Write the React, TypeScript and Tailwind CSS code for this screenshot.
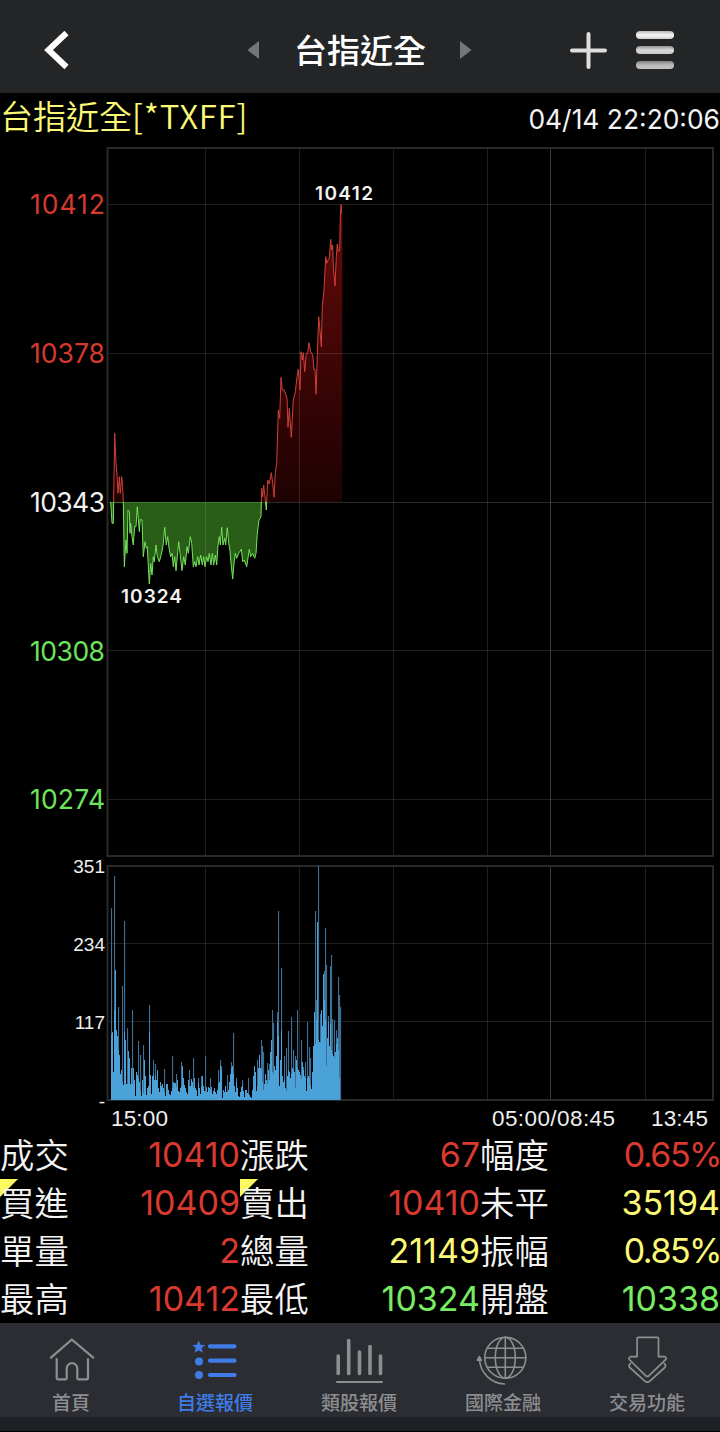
import type React from "react";

const BASE_Y = 502;
const VOLUME_BASE = 1100;

const priceLabels = [
  { y: 204, text: "10412", fill: "#d63a2f" },
  { y: 353, text: "10378", fill: "#d63a2f" },
  { y: 502, text: "10343", fill: "#f2f2f2" },
  { y: 651, text: "10308", fill: "#6fe35c" },
  { y: 799.5, text: "10274", fill: "#6fe35c" },
];

const volumeLabels = [
  { y: 866.5, text: "351" },
  { y: 944.5, text: "234" },
  { y: 1022, text: "117" },
  { y: 1101, text: "-" },
];

const timeLabels = [
  { x: 111, text: "15:00", width: 57 },
  { x: 492, text: "05:00/08:45", width: 123 },
  { x: 651, text: "13:45", width: 57 },
];

// x y pairs, one per tick
const price =
  "110.7,502 112,523.3 113.3,523.3 114.7,433.3 116,463.3 117,475 118,493.3 119.3,476.7 120.3,493.3 121.7,476.7 122.7,486.7 123.3,502 " +
  "124.3,566.7 126,540 127,553.3 128,510 129.3,511.7 130,533.3 130.7,523.3 132,536.7 133.3,545 134.7,526.7 136,526.7 137.3,506.7 139.3,531.7 " +
  "140.3,519.3 142,520 143.3,556.7 145,541.7 146.3,548.3 147.3,546.7 149.3,584 150.7,563.3 152,575 153.3,556.7 154.3,561.7 156,545 157.3,556.7 " +
  "159.3,561.7 160.7,556.7 162.3,550 163.3,543.3 164.7,527.3 166.3,545 167.7,536.7 169.3,550 170.7,556.7 172,553.3 173.3,566.7 174.7,556.7 176,570.7 " +
  "177.3,556.7 178.7,541.7 180,553.3 182,570.7 183.7,556.7 185.3,565 187,546.7 188.3,553.3 190.3,536.7 191.7,543.3 193.3,566.7 194.7,561.7 196,566.7 " +
  "197.7,556.7 199,565 200.7,555 202.3,565 203.7,556.7 205,566.7 206.7,556.7 208,561.7 209.3,553.3 211,565 212.3,553.3 213.7,565 215.3,555 216.7,565 " +
  "218,545 219.3,536.7 220.3,545 221.7,527.3 223,545 224.7,538.3 225.7,545 227.3,527.7 228.7,543 230,551 " +
  "231,563 232.7,579 234,563.3 235.3,553.3 236.7,558.3 238.7,553.3 241.3,549.3 242.7,561.7 244.3,560 246.7,566.7 249.3,549.3 250.7,556.7 252.7,553.3 " +
  "254.7,558.3 256,553.3 257.3,533.3 259,520 261,516.7 261.7,488.3 262.7,496.7 263.7,485 265.3,500 266.3,510 267.7,480 269.3,484 271.3,472.7 " +
  "272.7,483.3 274,497.3 275.3,473.3 276.7,463.3 278.3,410 279.7,418.3 281,377.3 282.3,390 284,390 286,395 287,398.3 288,427.3 289.3,408.3 291.3,437.3 " +
  "293.3,400 295.3,391.7 297.3,375 298.3,369.3 300,390 301,351.7 302.3,360 303.3,352.7 304.7,371.7 306.3,353.3 307.7,352.7 309,342.7 310.7,351.7 " +
  "312.7,355 314,370 315,369.3 316,394.3 317.3,356 318.7,316.7 319.7,326.7 321.3,346.7 322.3,306.7 324,290 325.7,256.7 326.7,263.3 328,260 329.3,258.3 " +
  "330.7,239.3 331.7,250 332.7,245 333.3,266.7 335,286 336.3,256.7 337.3,244 338.3,251.7 339.7,250 340.3,216.7 341,204.7 341.7,213.3";

const area = `${price} 342.3,213.3 342.3,${BASE_Y} 110.7,${BASE_Y}`;

// solid volume per pixel column, starting at x = 111
const volume = [
  66, 68, 28, 90, 130, 70, 64, 50, 45, 26, 30, 18, 15, 68, 60, 16, 16, 49, 42, 16, 32, 16, 32, 20, 4, 28, 25, 22, 18, 9,
  4, 20, 7, 40, 24, 5, 12, 14, 68, 25, 6, 24, 26, 20, 25, 20, 30, 12, 8, 18, 14, 16, 12, 8, 4, 16, 16, 10, 6,
  5, 9, 12, 18, 17, 17, 13, 20, 9, 8, 12, 14, 34, 22, 15, 12, 8, 6, 20, 14, 14, 21, 18, 12, 22, 12, 10, 4,
  17, 12, 6, 13, 24, 14, 9, 9, 13, 8, 13, 12, 10, 13, 6, 9, 12, 8, 6, 10, 16, 18, 34, 30, 2, 10, 8, 14,
  8, 8, 10, 18, 26, 32, 34, 26, 14, 8, 18, 12, 4, 3, 8, 13, 15, 9, 3, 10, 10, 7, 6, 5, 3,
  2, 10, 24, 34, 28, 9, 14, 32, 45, 32, 31, 18, 10, 16, 26, 20, 16, 30, 20, 48, 60, 28, 26, 34, 30, 44, 78, 64,
  14, 40, 70, 24, 18, 20, 12, 9, 24, 30, 28, 22, 26, 32, 30, 28, 12, 40, 32, 30, 28, 25, 21, 38, 30, 24, 22, 9, 22, 24,
  22, 15, 11, 28, 54, 88, 56, 80, 178, 60, 58, 58, 90, 74, 126, 100, 80, 34, 62, 78, 54, 76, 50, 46, 44, 42, 48, 56, 62, 50,
  22,
].slice(0, 231);

const spikes = [
  [111, 192], [114, 224], [118, 93], [122, 114], [124, 179], [127, 72], [132, 90], [138, 59], [140, 45], [143, 55],
  [149, 95], [153, 40], [155, 36], [164, 31], [172, 44], [176, 26], [181, 38], [189, 30], [193, 42], [198, 22], [201, 24],
  [205, 44], [210, 22], [218, 30], [220, 40], [221, 34], [227, 25], [231, 38], [233, 67], [236, 22], [242, 20], [248, 22],
  [257, 40], [259, 25], [261, 60], [262, 54], [263, 48], [267, 37], [269, 36], [272, 90], [273, 77], [277, 88], [278, 189],
  [281, 132], [284, 44], [286, 52], [288, 69], [291, 83], [293, 50], [295, 44], [297, 90], [301, 60], [303, 33], [305, 38],
  [307, 78], [309, 53], [310, 42], [315, 189], [316, 100], [318, 234], [320, 86], [321, 80], [323, 118], [324, 129],
  [325, 172], [326, 135], [328, 84], [330, 134], [331, 145], [332, 81], [334, 80], [336, 70], [338, 123], [339, 105], [340, 93],
];

const volumePath =
  `M111 ${VOLUME_BASE}` + volume.map((v) => `V${VOLUME_BASE - v}h1`).join("") + `V${VOLUME_BASE}Z`;

const RED = "text-[#d93a30]";
const YELLOW = "text-[#fbf976]";
const GREEN = "text-[#77ec62]";

const quotes = [
  { label: "成交", value: "10410", color: RED },
  { label: "漲跌", value: "67", color: RED },
  { label: "幅度", value: "0.65%", color: RED },
  { label: "買進", value: "10409", color: RED, marked: true },
  { label: "賣出", value: "10410", color: RED, marked: true },
  { label: "未平", value: "35194", color: YELLOW },
  { label: "單量", value: "2", color: RED },
  { label: "總量", value: "21149", color: YELLOW },
  { label: "振幅", value: "0.85%", color: YELLOW },
  { label: "最高", value: "10412", color: RED },
  { label: "最低", value: "10324", color: GREEN },
  { label: "開盤", value: "10338", color: GREEN },
];

const Header = () => (
  <header className="flex h-[93px] items-center bg-[#242527] pt-[7px]">
    <button type="button" className="ml-11">
      <svg width="26" height="40" viewBox="0 0 26 40" fill="none" stroke="#fff" strokeWidth="6">
        <path d="M22.5 3 4.5 20l18 17" />
      </svg>
    </button>
    <svg className="ml-[177px]" width="12" height="18" viewBox="0 0 12 18" fill="#72787a">
      <path d="M12 0v18L.5 9z" />
    </svg>
    <h1 className="ml-[35px] w-[132px] whitespace-nowrap pb-px text-[33px] font-medium leading-none text-white">
      台指近全
    </h1>
    <svg className="ml-[34px]" width="12" height="18" viewBox="0 0 12 18" fill="#72787a">
      <path d="M0 0v18l11.5-9z" />
    </svg>
    <button type="button" className="ml-[97px]">
      <svg width="38" height="38" viewBox="0 0 38 38" stroke="#dedede" strokeWidth="4" strokeLinecap="round">
        <path d="M3 19.500h33M19.500 3v33" />
      </svg>
    </button>
    <button type="button" className="ml-[29px] flex flex-col gap-[7px]">
      <span className="h-2 w-[38px] rounded-full bg-linear-to-b from-[#b5b5b5] via-[#f6f6f6] to-[#cfcfcf]" />
      <span className="h-2 w-[38px] rounded-full bg-linear-to-b from-[#929292] via-[#d9d9d9] to-[#c9c9c9]" />
      <span className="h-2 w-[38px] rounded-full bg-linear-to-b from-[#808080] via-[#b9b9b9] to-[#c2c2c2]" />
    </button>
  </header>
);

const Chart = () => (
  <svg className="block" width="720" height="989" viewBox="0 142 720 989" fontFamily="Inter, sans-serif">
    <defs>
      <linearGradient id="rise" gradientUnits="userSpaceOnUse" x1="0" x2="0" y1="204" y2="502">
        <stop offset="0" stopColor="#690c0c" />
        <stop offset="0.5" stopColor="#400505" />
        <stop offset="1" stopColor="#1e0202" />
      </linearGradient>
      <clipPath id="above">
        <rect x="108" y="148" width="604" height="354" />
      </clipPath>
      <clipPath id="below">
        <rect x="108" y="502" width="604" height="354" />
      </clipPath>
    </defs>

    <g clipPath="url(#above)">
      <polygon points={area} fill="url(#rise)" />
    </g>
    <g clipPath="url(#below)">
      <polygon points={area} fill="#2a5d18" />
    </g>

    <g stroke="#fff" strokeOpacity="0.12" strokeWidth="1">
      {[204.5, 353.5, 650.5, 799.5, 943.5, 1021.5].map((y) => (
        <path key={y} d={`M108 ${y}H712`} />
      ))}
      {[205.5, 299.5, 393.5, 487.5, 645.5].map((x) => (
        <path key={x} d={`M${x} 148V856M${x} 866V1100`} />
      ))}
      <path d="M108 502.500H712" strokeOpacity="0.16" />
      <path d="M550.500 148V856M550.500 866V1100" strokeOpacity="0.22" />
    </g>
    <path d="M110.700 502.500H262" stroke="#3b7a28" />
    <g fill="none" stroke="#292929" strokeWidth="2">
      <rect x="107.500" y="148" width="605.500" height="708" />
      <rect x="107.500" y="866" width="605.500" height="234" />
    </g>

    <g fill="none" strokeWidth="1" strokeLinejoin="round">
      <polyline points={price} stroke="#cf4038" clipPath="url(#above)" />
      <polyline points={price} stroke="#74e45a" clipPath="url(#below)" />
    </g>

    {spikes.map(([x, h]) => (
      <rect key={x} x={x} y={VOLUME_BASE - h} width="1.100" height={h} fill="#3d7097" />
    ))}
    <path d={volumePath} fill="#4aa2d9" />

    {priceLabels.map(({ y, text, fill }) => (
      <text key={text} x="105" y={y + 9.5} textAnchor="end" fontSize="26.500" textLength="75" fill={fill}>
        {text}
      </text>
    ))}
    <g fontSize="19" fontWeight="600" fill="#f2f2f2">
      <text x="315" y="199.500" textLength="58">10412</text>
      <text x="121" y="602.500" textLength="61">10324</text>
    </g>
    <g fontFamily="'Liberation Sans', Arial, sans-serif" fill="#efefef">
      {volumeLabels.map(({ y, text }) => (
        <text key={text} x="105" y={y + 6.5} textAnchor="end" fontSize="19">
          {text}
        </text>
      ))}
      {timeLabels.map(({ x, text, width }) => (
        <text key={text} x={x} y="1125.500" fontSize="22.500" textLength={width}>
          {text}
        </text>
      ))}
    </g>
  </svg>
);

const HomeIcon = () => (
  <g strokeWidth="2.200">
    <path d="M4 22.700 24.800 4.500l21.400 18.200" />
    <path d="M9.700 24v19.300q0 1 1 1h8q1 0 1-1V33.500a5.300 5.300 0 0 1 10.600 0v9.800q0 1 1 1h8.700q1 0 1-1V24" />
  </g>
);

const WatchlistIcon = () => (
  <>
    <g fill="currentColor" stroke="none">
      <path d="m7.700 5.500 1.800 4.300 4.700.3-3.600 3 1.200 4.600-4.100-2.500-4.100 2.500 1.200-4.600-3.600-3 4.700-.3z" />
      <circle cx="8" cy="26.500" r="4" />
      <circle cx="8" cy="40" r="4" />
    </g>
    <path d="M19 11.300h24.500M19 25.700h24.500M19 40h24.500" strokeWidth="4.200" />
  </>
);

const SectorIcon = () => (
  <>
    <path d="M3.200 21v17.500M13.700 5.500v33M24.500 17v21.500M35 11.500v27M45.500 21v17.500" strokeWidth="3.600" />
    <path d="M2 47h45" strokeWidth="2" />
  </>
);

const GlobeIcon = () => (
  <g strokeWidth="1.600">
    <circle cx="26.300" cy="22.700" r="20.500" />
    <ellipse cx="26.300" cy="22.700" rx="10" ry="20.500" />
    <path d="M26.300 2.200v41M5.800 22.700h41M8.300 13.300h36M8.300 32.300h36" />
    <path d="M.5 24.500A26 26 0 0 0 25.500 49" />
    <path d="m.3 21.500-2 3.800h4.200z" fill="currentColor" />
  </g>
);

const TradeIcon = () => (
  <g strokeWidth="1.700">
    <path d="M15.300 2.300h19q1.200 0 1.200 1.200v18.200h6.300q2.500 1 .8 3L26 40.700q-1.700 1.300-3.400 0L6.700 25q-1.700-2.300.8-3.300h6.600V3.500q0-1.200 1.200-1.200z" />
    <path d="M7.500 28.500q-2.500 1.800-.7 4l15 13.600q2.500 2 5 0l15-13.600q1.800-2.200-.7-4" />
  </g>
);

const tabs: { label: string; icon: React.ReactNode; active?: boolean }[] = [
  { label: "首頁", icon: <HomeIcon /> },
  { label: "自選報價", icon: <WatchlistIcon />, active: true },
  { label: "類股報價", icon: <SectorIcon /> },
  { label: "國際金融", icon: <GlobeIcon /> },
  { label: "交易功能", icon: <TradeIcon /> },
];

const TabBar = () => (
  <nav className="h-[109px] border-b border-black bg-[#1c2125]">
    <div className="grid h-[94px] grid-cols-5 bg-[#2b2d32]">
      {tabs.map(({ label, icon, active }) => (
        <button
          key={label}
          type="button"
          className={`flex flex-col items-center pt-3 ${active ? "text-[#3f7ce8]" : "text-[#8d8e91]"}`}
        >
          <svg
            className="overflow-visible"
            width="50"
            height="50"
            viewBox="0 0 50 50"
            fill="none"
            stroke="currentColor"
            strokeLinecap="round"
            strokeLinejoin="round"
          >
            {icon}
          </svg>
          <span className="mt-[7px] mr-[2px] text-[19px] font-medium leading-5">{label}</span>
        </button>
      ))}
    </div>
  </nav>
);

export default function App() {
  return (
    <div className="h-[1432px] w-[720px] overflow-hidden bg-black font-['Noto_Sans_CJK_TC',sans-serif]">
      <Header />
      <div className="flex h-[49px] items-center justify-between whitespace-nowrap leading-none">
        <span className="pb-1 text-[33px] font-[350] text-[#fbf976]">
          台指近全<span className="tracking-[0.8px]">[*TXFF]</span>
        </span>
        <span className="pt-1 font-['Inter',sans-serif] text-[26.4px] text-[#f4f4f4]">04/14 22:20:06</span>
      </div>
      <Chart />
      <div className="grid grid-cols-3">
        {quotes.map(({ label, value, color, marked }) => (
          <div key={label} className="relative flex h-12 items-center justify-between leading-none">
            {marked && (
              <i className="absolute left-0 top-0 size-[18px] bg-[#fbf95f] [clip-path:polygon(0_0,100%_0,0_100%)]" />
            )}
            <span className="relative pb-[3px] text-[34.4px] font-[350] text-[#f4f4f4]">{label}</span>
            <span
              className={`font-['Inter',sans-serif] text-[34px] ${color} ${value.endsWith("%") ? "-mr-px tracking-[-1.5px]" : ""}`}
            >
              {value}
            </span>
          </div>
        ))}
      </div>
      <TabBar />
    </div>
  );
}
